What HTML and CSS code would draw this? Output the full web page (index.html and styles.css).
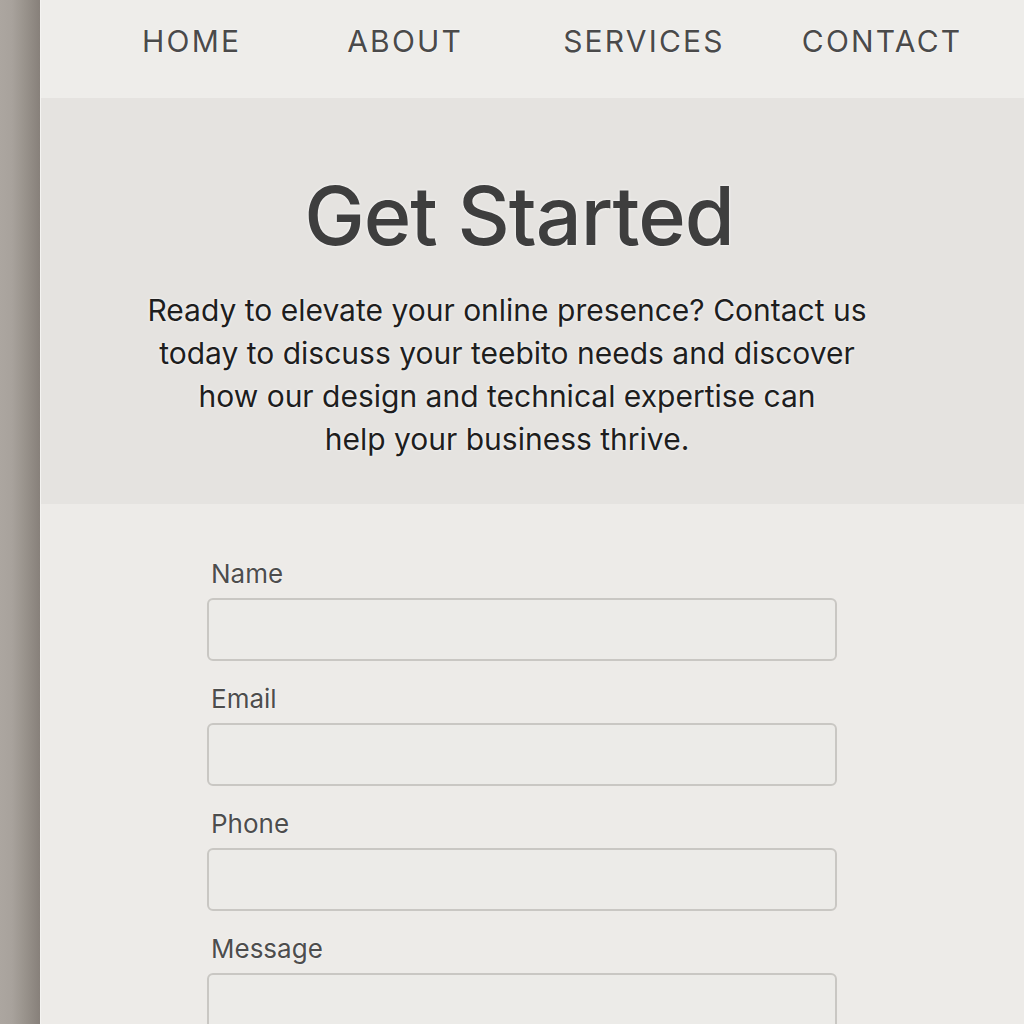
FILE: index.html
```html
<!DOCTYPE html>
<html lang="en">
<head>
    <meta charset="UTF-8">
    <title>Get Started</title>
    <link rel="stylesheet" href="styles.css">
</head>
<body>

<div class="frame">
    <div class="side-strip"></div>

    <div class="page">
        <nav class="top-nav">
            <a href="#" class="nav-home">HOME</a>
            <a href="#" class="nav-about">ABOUT</a>
            <a href="#" class="nav-services">SERVICES</a>
            <a href="#" class="nav-contact">CONTACT</a>
        </nav>

        <section class="hero">
            <h1>Get Started</h1>
            <p>
                Ready to elevate your online presence? Contact us<br>
                today to discuss your teebito needs and discover<br>
                how our design and technical expertise can<br>
                help your business thrive.
            </p>
        </section>

        <form class="contact-form">
            <div class="field">
                <label for="name">Name</label>
                <input type="text" id="name">
            </div>
            <div class="field">
                <label for="email">Email</label>
                <input type="email" id="email">
            </div>
            <div class="field">
                <label for="phone">Phone</label>
                <input type="tel" id="phone">
            </div>
            <div class="field">
                <label for="message">Message</label>
                <textarea id="message"></textarea>
            </div>
        </form>
    </div>
</div>

</body>
</html>
```

FILE: styles.css
```css
html, body {
    margin: 0;
    padding: 0;
    height: 100%;
    overflow: hidden;
}
body {
    font-family: Inter, "Noto Sans", sans-serif;
    background: #edebe8;
}
.frame {
    display: flex;
    height: 1024px;
    overflow: hidden;
}
.side-strip {
    width: 40px;
    flex-shrink: 0;
    background: linear-gradient(to right, #aca6a0 0%, #a8a29c 30%, #9a948d 60%, #87807a 100%);
    border-right: 1px solid #f4f3f1;
}
.page {
    flex: 1;
    display: flex;
    flex-direction: column;
    overflow: hidden;
}
.top-nav {
    height: 98px;
    flex-shrink: 0;
    box-sizing: border-box;
    display: flex;
    align-items: center;
    padding: 0 0 16px 101px;
    background: #eeedea;
}
.top-nav a {
    font-size: 30px;
    letter-spacing: 2.2px;
    color: #4a4a4a;
    text-decoration: none;
    text-shadow: 0 0 2px #fff;
}
.nav-about {
    margin-left: 106px;
}
.nav-services {
    margin-left: 100px;
}
.nav-contact {
    margin-left: 77px;
    letter-spacing: 1.7px;
}
.hero {
    height: 406px;
    flex-shrink: 0;
    box-sizing: border-box;
    background: #e5e3e0;
    text-align: center;
    padding-top: 70px;
    padding-right: 27px;
}
.hero h1 {
    margin: 0;
    font-size: 81px;
    font-weight: 500;
    letter-spacing: -1px;
    line-height: 96px;
    color: #3e3e3e;
    text-shadow: 0 0 3px #fff;
}
.hero p {
    margin: 25px 0 0;
    padding-right: 24px;
    font-size: 30px;
    line-height: 43px;
    color: #1e1e1e;
    text-shadow: 0 0 3px #fff;
}
.contact-form {
    flex-shrink: 0;
    padding: 55px 0 0 166px;
}
.field {
    width: 630px;
    margin-bottom: 23px;
}
.field label {
    display: block;
    margin-left: 4px;
    margin-bottom: 9px;
    font-size: 26px;
    line-height: 30px;
    color: #4d4d4d;
    text-shadow: 0 0 2px #fff;
}
.field input,
.field textarea {
    display: block;
    box-sizing: border-box;
    width: 630px;
    height: 63px;
    border: 2px solid #c9c7c3;
    border-radius: 6px;
    background: #ecebe8;
    font-family: inherit;
    font-size: 20px;
}
.field textarea {
    height: 80px;
    resize: none;
}
```
